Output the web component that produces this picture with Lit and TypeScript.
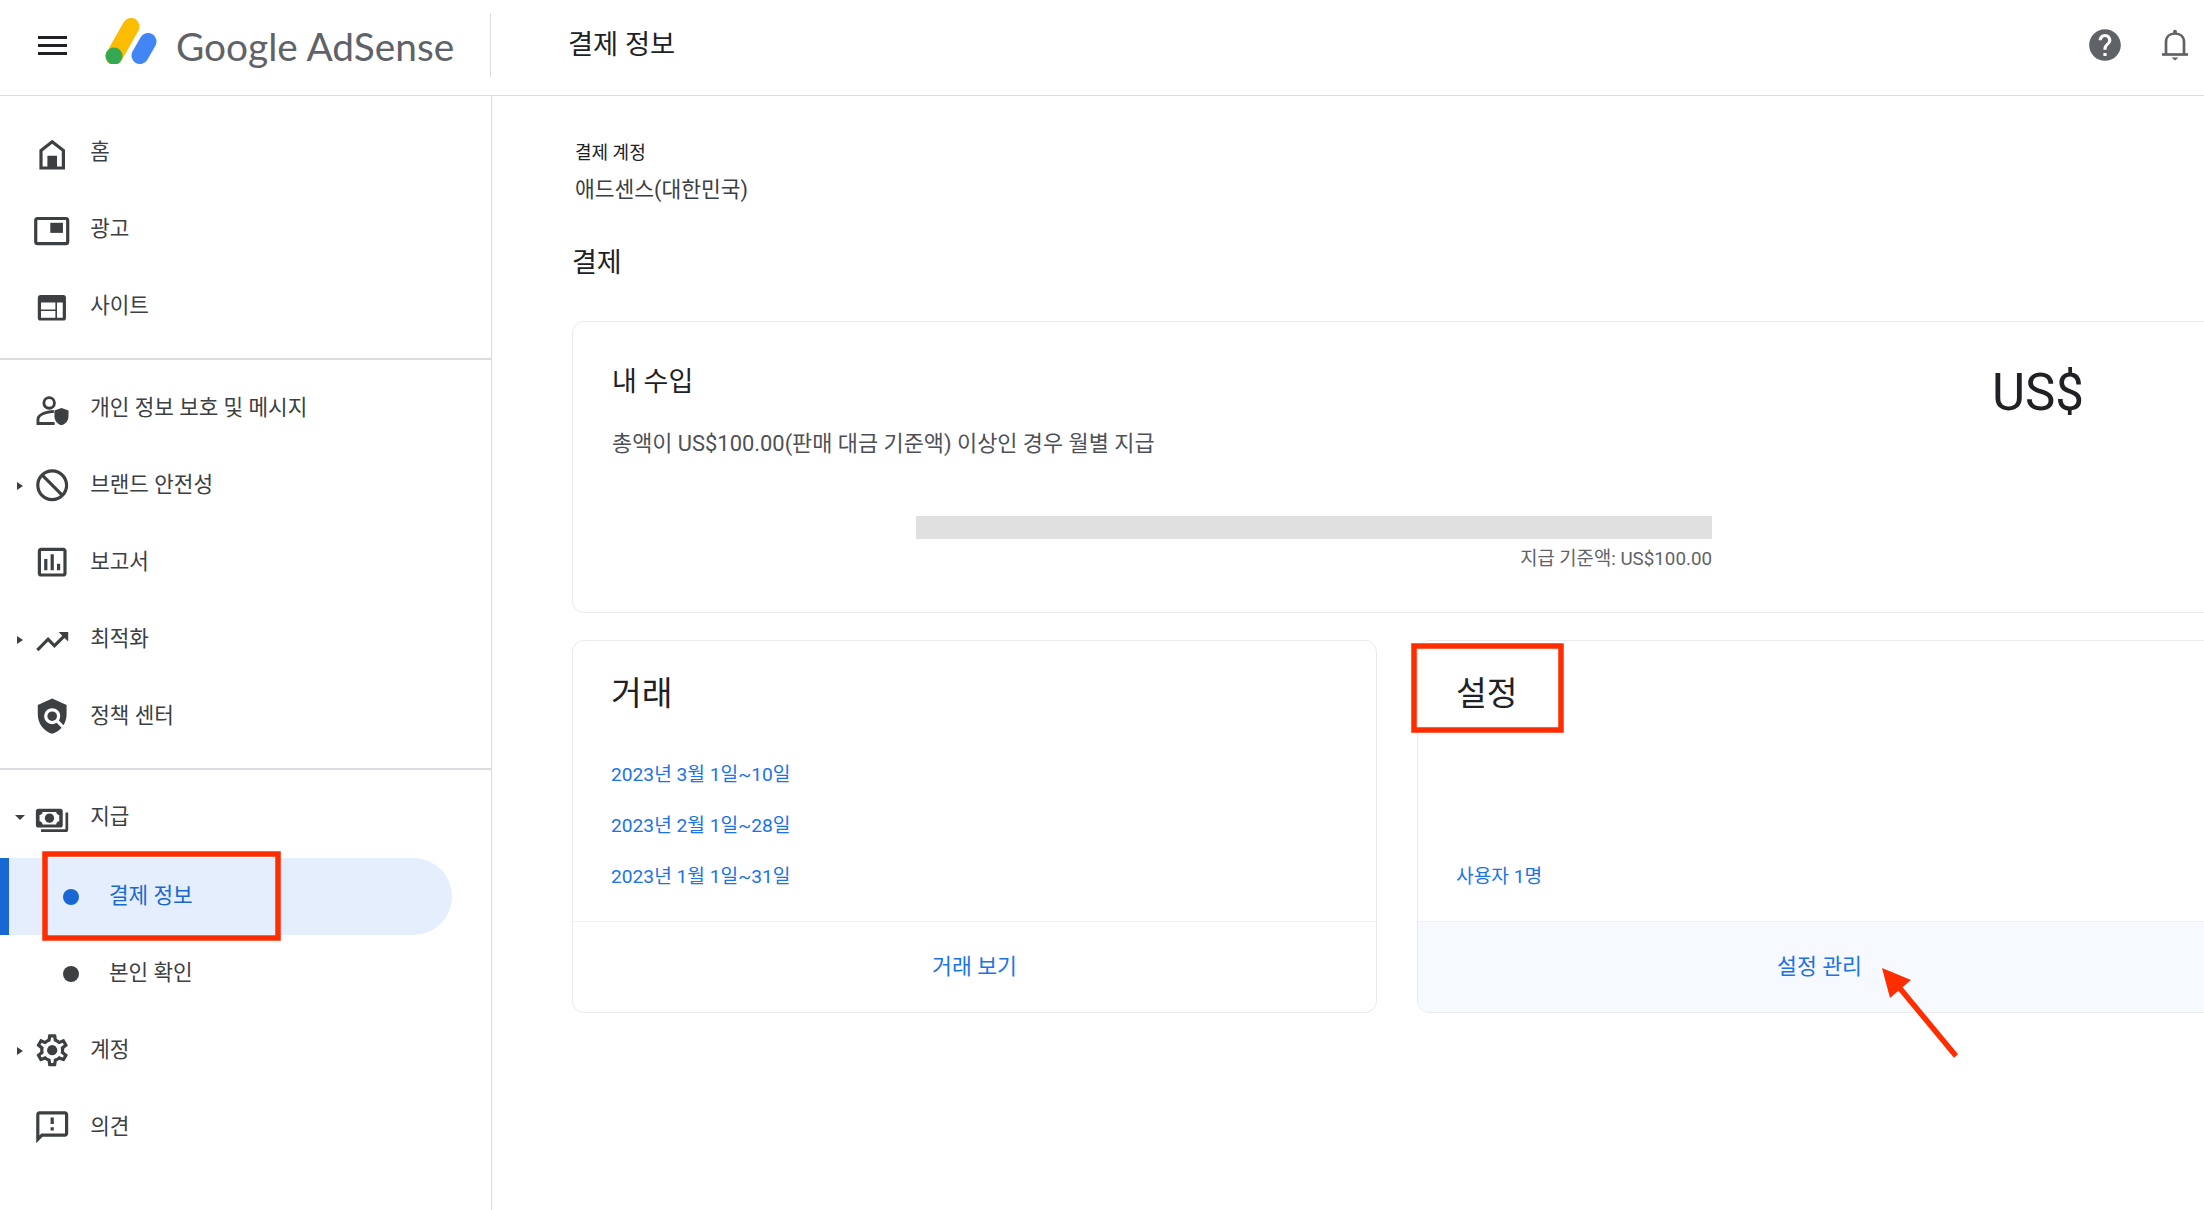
import { html, svg, css, LitElement, TemplateResult, nothing } from 'lit';
import { customElement } from 'lit/decorators.js';

interface NavItem {
  label: string;
  icon: TemplateResult;
  caret?: 'right' | 'down';
}

const icons = {
  home: svg`<path fill-rule="evenodd" d="M12 4.2 20 10.5V22.8H4V10.5ZM12 6.7 6 11.4V21H9V14.2H15V21H18V11.4Z"/>`,
  ads: svg`<rect x="1.7" y="5.3" width="20" height="15.7" rx="1.2" fill="none" stroke="currentColor" stroke-width="2"/><rect x="10.8" y="8" width="7.9" height="6.3"/>`,
  sites: svg`<path fill-rule="evenodd" d="M4.5 5H19a1.6 1.6 0 0 1 1.6 1.6V19.4A1.6 1.6 0 0 1 19 21H4.6A1.6 1.6 0 0 1 3 19.4V6.6A1.6 1.6 0 0 1 4.5 5ZM5 9.7V14H14V9.7ZM5 15V19.3H14V15ZM15 9.7V19.3H18.6V9.7Z"/>`,
  privacy: svg`<circle cx="10.1" cy="8.7" r="3.3" fill="none" stroke="currentColor" stroke-width="1.8"/><path d="M2.2 22.5V19C2.2 15.5 8 13.2 13 13.2V15C9 15 4 16.5 4 19V20.7H13.5V22.5Z"/><path d="M17.8 11.8 22.2 13.5V17C22.2 19.8 20.4 21.8 17.8 22.6 15.2 21.8 13.4 19.8 13.4 17V13.5Z"/>`,
  block: svg`<path transform="matrix(-1 0 0 1 24 0)" d="M12 2C6.48 2 2 6.48 2 12s4.48 10 10 10 10-4.48 10-10S17.52 2 12 2zM4 12c0-4.42 3.58-8 8-8 1.85 0 3.55.63 4.9 1.69L5.69 16.9C4.63 15.55 4 13.85 4 12zm8 8c-1.85 0-3.55-.63-4.9-1.69L18.31 7.1C19.37 8.45 20 10.15 20 12c0 4.42-3.58 8-8 8z"/>`,
  reports: svg`<path d="M19 3H5c-1.1 0-2 .9-2 2v14c0 1.1.9 2 2 2h14c1.1 0 2-.9 2-2V5c0-1.1-.9-2-2-2zm0 16H5V5h14v14zM7 10h2v7H7zm4-3h2v10h-2zm4 6h2v4h-2z"/>`,
  trend: svg`<path transform="translate(0 1.500)" d="M16 6l2.29 2.29-4.88 4.88-4-4L2 16.59 3.41 18l6-6 4 4 6.3-6.29L22 12V6z"/>`,
  policy: svg`<path d="M21 5l-9-4-9 4v6c0 5.55 3.84 10.74 9 12 2.3-.56 4.33-1.9 5.88-3.71l-3.12-3.12c-1.94 1.29-4.58 1.07-6.29-.64-1.95-1.95-1.95-5.12 0-7.07 1.95-1.95 5.12-1.95 7.07 0 1.71 1.71 1.92 4.35.64 6.29l2.9 2.9C20.29 15.69 21 13.38 21 11V5z"/><circle cx="12" cy="12" r="3"/>`,
  payments: svg`<path fill-rule="evenodd" d="M3.4 6.7H17a1.6 1.6 0 0 1 1.6 1.6V16.9A1.6 1.6 0 0 1 17 18.5H3.4A1.6 1.6 0 0 1 1.8 16.9V8.3A1.6 1.6 0 0 1 3.4 6.7ZM6 8.7H14.5C14.7 9.8 15.3 10.4 16.4 10.6V14.6C15.3 14.8 14.7 15.4 14.5 16.5H6C5.8 15.4 5.2 14.8 4.1 14.6V10.6C5.2 10.4 5.8 9.8 6 8.7Z"/><circle cx="10.3" cy="12.6" r="2.9"/><path d="M20.3 9H22V19.7A1.6 1.6 0 0 1 20.4 21.3H5V19.6H20.3Z"/>`,
  settings: svg`<path d="M19.43 12.98c.04-.32.07-.64.07-.98 0-.34-.03-.66-.07-.98l2.11-1.65c.19-.15.24-.42.12-.64l-2-3.46c-.09-.16-.26-.25-.44-.25-.06 0-.12.01-.17.03l-2.49 1c-.52-.4-1.08-.73-1.69-.98l-.38-2.65C14.46 2.18 14.25 2 14 2h-4c-.25 0-.46.18-.49.42l-.38 2.65c-.61.25-1.17.59-1.69.98l-2.49-1c-.06-.02-.12-.03-.18-.03-.17 0-.34.09-.43.25l-2 3.46c-.13.22-.07.49.12.64l2.11 1.65c-.04.32-.07.65-.07.98 0 .33.03.66.07.98l-2.11 1.65c-.19.15-.24.42-.12.64l2 3.46c.09.16.26.25.44.25.06 0 .12-.01.17-.03l2.49-1c.52.4 1.08.73 1.69.98l.38 2.65c.03.24.24.42.49.42h4c.25 0 .46-.18.49-.42l.38-2.65c.61-.25 1.17-.59 1.69-.98l2.49 1c.06.02.12.03.18.03.17 0 .34-.09.43-.25l2-3.46c.12-.22.07-.49-.12-.64l-2.11-1.65zm-1.98-1.71c.04.31.05.52.05.73 0 .21-.02.43-.05.73l-.14 1.13.89.7 1.08.84-.7 1.21-1.27-.51-1.04-.42-.9.68c-.43.32-.84.56-1.25.73l-1.06.43-.16 1.13-.2 1.35h-1.4l-.19-1.35-.16-1.13-1.06-.43c-.43-.18-.83-.41-1.23-.71l-.91-.7-1.06.43-1.27.51-.7-1.21 1.08-.84.89-.7-.14-1.13c-.03-.31-.05-.54-.05-.74s.02-.43.05-.73l.14-1.13-.89-.7-1.08-.84.7-1.21 1.27.51 1.04.42.9-.68c.43-.32.84-.56 1.25-.73l1.06-.43.16-1.13.2-1.35h1.39l.19 1.35.16 1.13 1.06.43c.43.18.83.41 1.23.71l.91.7 1.06-.43 1.27-.51.7 1.21-1.07.85-.89.7.14 1.13z"/><circle cx="12" cy="12" r="3.2"/>`,
  feedback: svg`<path d="M20 2H4c-1.1 0-1.99.9-1.99 2L2 22l4-4h14c1.1 0 2-.9 2-2V4c0-1.1-.9-2-2-2zm0 14H5.17L4 17.17V4h16v12zm-9-4h2v2h-2zm0-6h2v4h-2z"/>`,
};

const groupOne: NavItem[] = [
  { label: '홈', icon: icons.home },
  { label: '광고', icon: icons.ads },
  { label: '사이트', icon: icons.sites },
];

const groupTwo: NavItem[] = [
  { label: '개인 정보 보호 및 메시지', icon: icons.privacy },
  { label: '브랜드 안전성', icon: icons.block, caret: 'right' },
  { label: '보고서', icon: icons.reports },
  { label: '최적화', icon: icons.trend, caret: 'right' },
  { label: '정책 센터', icon: icons.policy },
];

const transactions = ['2023년 3월 1일~10일', '2023년 2월 1일~28일', '2023년 1월 1일~31일'];

@customElement('app-root')
export class AppRoot extends LitElement {
  renderItem(item: NavItem): TemplateResult {
    return html`<a class="row">
      <span class="caret-slot">
        ${item.caret ? html`<i class="caret ${item.caret}"></i>` : nothing}
      </span>
      <svg class="icon" viewBox="0 0 24 24" fill="currentColor">${item.icon}</svg>
      <span class="label">${item.label}</span>
    </a>`;
  }

  render() {
    return html`
      <header>
        <div class="brand">
          <svg class="menu" viewBox="0 0 29 19" fill="#202124">
            <rect y="0" width="29" height="3"></rect>
            <rect y="8" width="29" height="3"></rect>
            <rect y="16" width="29" height="3"></rect>
          </svg>
          <svg class="logo" viewBox="0 0 54 46" fill="none" stroke-linecap="round" stroke-width="17">
            <path d="M27 8.500 10 38.500" stroke="#fbbc04"></path>
            <path d="M44 23.500 36 37.500" stroke="#4285f4"></path>
            <circle cx="10" cy="38" r="8.500" fill="#34a853" stroke="none"></circle>
          </svg>
          <span class="wordmark">Google AdSense</span>
        </div>
        <h1>결제 정보</h1>
        <div class="actions">
          <svg class="help" viewBox="0 0 24 24" fill="#5f6368">
            <path d="M12 2C6.48 2 2 6.48 2 12s4.48 10 10 10 10-4.48 10-10S17.52 2 12 2zm1 17h-2v-2h2v2zm2.07-7.75-.9.92C13.45 12.9 13 13.5 13 15h-2v-.5c0-1.1.45-2.1 1.17-2.83l1.24-1.26c.37-.36.59-.86.59-1.41 0-1.1-.9-2-2-2s-2 .9-2 2H8c0-2.21 1.79-4 4-4s4 1.79 4 4c0 .88-.36 1.68-.93 2.25z"></path>
          </svg>
          <svg class="bell" viewBox="0 0 26 32" fill="none" stroke="#5f6368" stroke-width="2.700">
            <path d="M4 25V13C4 7.500 8 4.500 13 4.500S22 7.500 22 13V25"></path>
            <path d="M0 25.500H26"></path>
            <circle cx="13" cy="2.800" r="2" fill="#5f6368" stroke="none"></circle>
            <path d="M9.500 28.500H16.500L13 31.500Z" fill="#5f6368" stroke="none"></path>
          </svg>
        </div>
      </header>
      <div class="layout">
        <nav>
          <div class="group first">${groupOne.map(i => this.renderItem(i))}</div>
          <div class="group">${groupTwo.map(i => this.renderItem(i))}</div>
          <div class="group last">
            ${this.renderItem({ label: '지급', icon: icons.payments, caret: 'down' })}
            <a class="row sub active"><i class="dot"></i><span class="label">결제 정보</span></a>
            <a class="row sub"><i class="dot"></i><span class="label">본인 확인</span></a>
            ${this.renderItem({ label: '계정', icon: icons.settings, caret: 'right' })}
            ${this.renderItem({ label: '의견', icon: icons.feedback })}
          </div>
        </nav>
        <main>
          <div class="account-label">결제 계정</div>
          <div class="account-value">애드센스(대한민국)</div>
          <h2>결제</h2>
          <section class="card income">
            <div class="income-top">
              <div>
                <h3>내 수입</h3>
                <p>총액이 US$100.00(판매 대금 기준액) 이상인 경우 월별 지급</p>
              </div>
              <div class="amount">US$</div>
            </div>
            <div class="threshold">
              <div class="bar"></div>
              <div class="bar-label">지급 기준액: US$100.00</div>
            </div>
          </section>
          <div class="cards">
            <section class="card">
              <div class="card-body">
                <h4>거래</h4>
                <div class="links">
                  ${transactions.map(t => html`<a>${t}</a>`)}
                </div>
              </div>
              <a class="card-foot">거래 보기</a>
            </section>
            <section class="card">
              <div class="card-body">
                <h4>설정</h4>
                <div class="links"><a>사용자 1명</a></div>
              </div>
              <a class="card-foot tinted">설정 관리</a>
            </section>
          </div>
        </main>
      </div>
      <svg class="marks" viewBox="0 0 2204 1210" fill="none" stroke="#ff2d00">
        <rect x="45" y="854" width="233" height="84" stroke-width="5.500"></rect>
        <rect x="1414" y="646" width="147" height="84" stroke-width="5.500"></rect>
        <path d="M1956 1056 1898 986" stroke-width="5.500"></path>
        <path d="M1882 968 1911 980 1890 998Z" fill="#ff2d00" stroke="none"></path>
      </svg>
    `;
  }

  static styles = css`
    :host {
      display: block;
      position: relative;
      width: 2204px;
      height: 1210px;
      overflow: hidden;
      background: #fff;
      color: #3c4043;
      font-family: Roboto, 'Noto Sans CJK KR', sans-serif;
      font-size: 21px;
    }

    header {
      display: flex;
      align-items: center;
      height: 95px;
      border-bottom: 1.5px solid #dadce0;
    }

    .brand {
      display: flex;
      align-items: center;
      width: 491px;
      height: 64px;
      margin-top: -5px;
      padding-left: 38px;
      box-sizing: border-box;
      border-right: 1px solid #dadce0;
    }

    .menu {
      width: 29px;
      height: 19px;
    }

    .logo {
      width: 54px;
      height: 46px;
      margin: -9px 0 0 37px;
    }

    .wordmark {
      margin: 1px 0 0 18px;
      font-family: Lato, sans-serif;
      font-size: 38.8px;
      color: #5f6368;
      white-space: nowrap;
    }

    h1 {
      margin: -6px 0 0 77px;
      font-size: 27.3px;
      font-weight: 400;
      line-height: 36px;
      color: #202124;
    }

    .actions {
      display: flex;
      align-items: center;
      margin: -5px 0 0 auto;
      padding-right: 16px;
    }

    .help {
      width: 38px;
      height: 38px;
    }

    .bell {
      width: 26px;
      height: 32px;
      margin-left: 38px;
    }

    .layout {
      display: flex;
    }

    nav {
      flex: none;
      width: 492px;
      height: 1114px;
      box-sizing: border-box;
      border-right: 1px solid #dadce0;
    }

    .group {
      padding: 10px 0 13px;
      border-bottom: 2px solid #dadce0;
    }

    .group.first {
      padding-top: 18px;
    }

    .group.last {
      padding-top: 9px;
      border-bottom: 0;
    }

    .row {
      display: flex;
      align-items: center;
      height: 77px;
      padding-left: 12px;
      white-space: nowrap;
    }

    .label {
      padding-bottom: 1px;
      font-size: 21.3px;
      line-height: 30px;
    }

    .caret-slot {
      display: flex;
      justify-content: center;
      width: 16px;
      margin-right: 4.8px;
    }

    .caret {
      display: block;
      border-style: solid;
      border-color: transparent;
    }

    .caret.right {
      border-width: 4.5px 0 4.5px 6px;
      border-left-color: #3c4043;
    }

    .caret.down {
      border-width: 5px 5px 0;
      border-top-color: #3c4043;
    }

    .icon {
      flex: none;
      width: 38.4px;
      height: 38.4px;
      margin-right: 19px;
    }

    .row.sub {
      padding-left: 63px;
    }

    .row.sub .dot {
      width: 16px;
      height: 16px;
      margin-right: 30px;
      border-radius: 50%;
      background: #3c4043;
    }

    .row.active {
      width: 452px;
      margin-top: 2px;
      box-sizing: border-box;
      border-radius: 0 38.5px 38.5px 0;
      background: #e4eefd;
      box-shadow: inset 9px 0 0 #1967d2;
      color: #1967d2;
    }

    .row.sub.active .dot {
      background: #1967d2;
    }

    main {
      flex: none;
      width: 1650px;
      margin-left: 80px;
      padding-top: 45px;
    }

    .account-label {
      margin-left: 3px;
      font-size: 18px;
      line-height: 24px;
      color: #202124;
    }

    .account-value {
      margin: 10px 0 0 3px;
      font-size: 21.5px;
      line-height: 30px;
    }

    h2 {
      margin: 38px 0 38px;
      font-size: 27px;
      font-weight: 400;
      line-height: 40px;
      color: #202124;
    }

    .card {
      display: flex;
      flex-direction: column;
      box-sizing: border-box;
      border: 1px solid #e8eaed;
      border-radius: 12px;
      overflow: hidden;
    }

    .income {
      height: 292px;
      padding: 40px 39px 0;
    }

    .income-top {
      display: flex;
      justify-content: space-between;
    }

    h3 {
      margin: 0;
      font-size: 27px;
      font-weight: 400;
      line-height: 40px;
      color: #202124;
    }

    .income p {
      margin: 26.5px 0 0;
      font-size: 21.9px;
      line-height: 30px;
      color: #4d5156;
    }

    .amount {
      margin: 0.5px 98px 0 0;
      font-size: 51px;
      line-height: 60px;
      color: #202124;
    }

    .threshold {
      width: 796px;
      margin: 57.5px 0 0 304px;
    }

    .bar {
      height: 23px;
      background: #e0e0e0;
    }

    .bar-label {
      margin-top: 8px;
      font-size: 18.8px;
      line-height: 24px;
      text-align: right;
      color: #5f6368;
    }

    .cards {
      display: grid;
      grid-template-columns: 805px 805px;
      gap: 40px;
      margin-top: 27px;
    }

    .cards .card {
      height: 373px;
    }

    .card-body {
      flex: 1;
      display: flex;
      flex-direction: column;
      padding: 32.5px 38px 29px;
    }

    h4 {
      margin: 0;
      font-size: 33.5px;
      font-weight: 400;
      line-height: 40px;
      color: #202124;
    }

    .links {
      display: flex;
      flex-direction: column;
      gap: 21px;
      margin-top: auto;
    }

    .links a {
      font-size: 19.2px;
      line-height: 30px;
      color: #1a73e8;
    }

    .card-foot {
      display: flex;
      align-items: center;
      justify-content: center;
      height: 90px;
      border-top: 1px solid #eef0f2;
      font-size: 21.6px;
      line-height: 30px;
      color: #1a73e8;
    }

    .card-foot.tinted {
      background: #f6f9fe;
    }

    .marks {
      position: absolute;
      top: 0;
      left: 0;
      width: 2204px;
      height: 1210px;
      pointer-events: none;
    }
  `;
}
